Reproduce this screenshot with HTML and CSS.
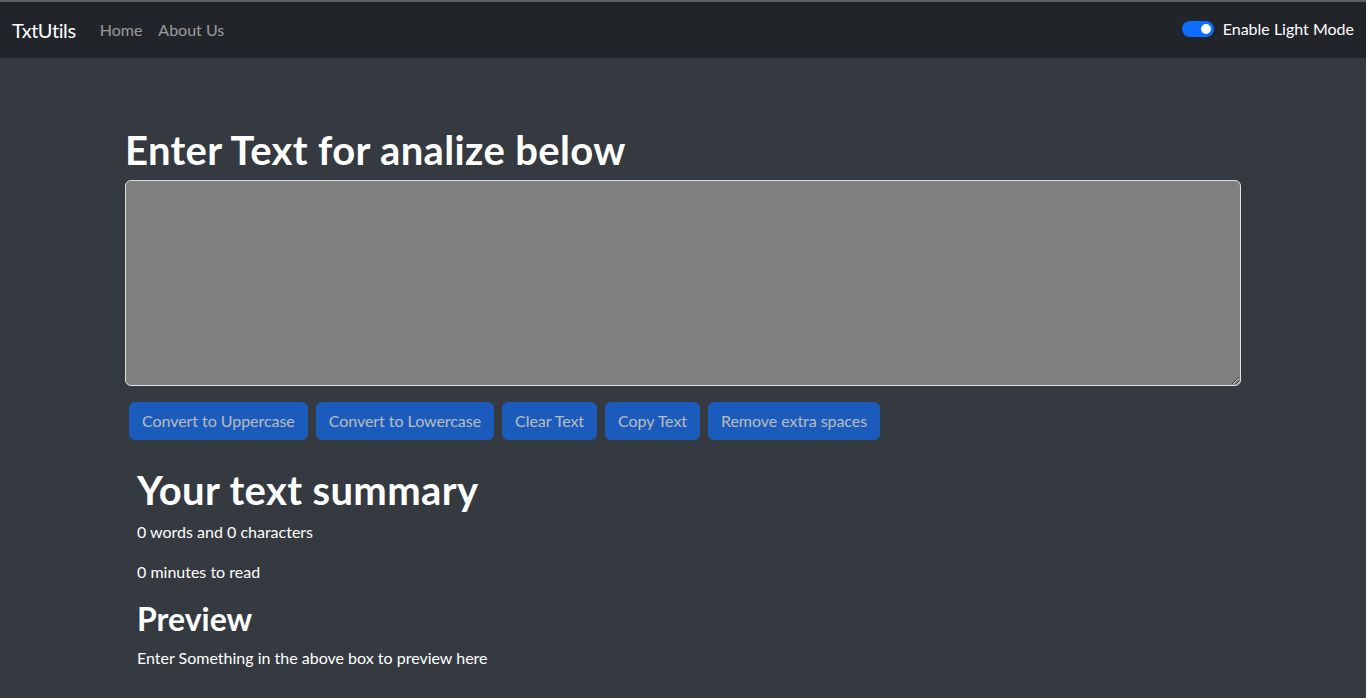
FILE: index.html
```html
<!DOCTYPE html>
<html lang="en">
<head>
<meta charset="utf-8">
<title>TxtUtils</title>
<link rel="stylesheet" href="styles.css">
</head>
<body>
<nav class="navbar">
  <div class="nav-left">
    <a class="brand" href="#">TxtUtils</a>
    <ul class="nav-links">
      <li><a class="nav-link" href="#">Home</a></li>
      <li><a class="nav-link" href="#">About Us</a></li>
    </ul>
  </div>
  <div class="switch">
    <span class="switch-track"><span class="switch-knob"></span></span>
    <label class="switch-label">Enable Light Mode</label>
  </div>
</nav>

<main class="container">
  <h1 class="title">Enter Text for analize below</h1>
  <textarea class="text-box" rows="8"></textarea>
  <div class="buttons">
    <button class="btn" disabled>Convert to Uppercase</button>
    <button class="btn" disabled>Convert to Lowercase</button>
    <button class="btn" disabled>Clear Text</button>
    <button class="btn" disabled>Copy Text</button>
    <button class="btn" disabled>Remove extra spaces</button>
  </div>

  <section class="summary">
    <h1 class="title">Your text summary</h1>
    <p class="line">0 words and 0 characters</p>
    <p class="line">0 minutes to read</p>
    <h2 class="subtitle">Preview</h2>
    <p class="line">Enter Something in the above box to preview here</p>
  </section>
</main>
</body>
</html>
```

FILE: styles.css
```css
* { box-sizing: border-box; }

html, body {
  margin: 0;
  padding: 0;
}

body {
  background: #343a40;
  color: #ffffff;
  font-family: Lato, "Noto Sans", sans-serif;
  font-size: 16px;
  line-height: 1.5;
  border-top: 2px solid #5d5e60;
  min-height: 698px;
}

.navbar {
  background: #212529;
  height: 56px;
  padding: 8px 12px;
  display: flex;
  align-items: center;
  justify-content: space-between;
}

.nav-left {
  display: flex;
  align-items: center;
}

.brand {
  color: #fff;
  text-decoration: none;
  font-size: 20px;
  line-height: 30px;
  padding: 5px 0;
  margin-right: 16px;
  letter-spacing: -0.4px;
}

.nav-links {
  list-style: none;
  margin: 0;
  padding: 0;
  display: flex;
}

.nav-link {
  display: block;
  padding: 8px;
  color: rgba(255, 255, 255, 0.55);
  text-decoration: none;
  font-size: 16px;
}

.switch {
  display: flex;
  align-items: center;
  gap: 9px;
  margin-top: -2px;
}

.switch-track {
  width: 32px;
  height: 16px;
  border-radius: 8px;
  background: #0d6efd;
  display: flex;
  align-items: center;
  justify-content: flex-end;
  padding: 0 3px;
}

.switch-knob {
  width: 10px;
  height: 10px;
  border-radius: 50%;
  background: #fff;
}

.switch-label {
  color: #fff;
  font-size: 16px;
}

.container {
  width: 1140px;
  margin: 0 auto;
  padding: 68px 12px 16px;
}

.title {
  font-size: 40px;
  font-weight: 700;
  line-height: 1.2;
  margin: 0 0 6px;
  letter-spacing: 0.35px;
}

.text-box {
  display: block;
  width: 100%;
  height: 206px;
  background: #808080;
  color: #fff;
  border: 1px solid #dee2e6;
  border-radius: 6px;
  padding: 6px 12px;
  font-family: inherit;
  font-size: 16px;
  line-height: 1.5;
  margin: 0 0 16px;
}

.buttons {
  display: flex;
  gap: 8px;
  padding: 0 4px;
}

.btn {
  background: #0d6efd;
  color: #fff;
  border: 1px solid #0d6efd;
  border-radius: 6px;
  padding: 6px 12px;
  font-family: inherit;
  font-size: 16px;
  line-height: 24px;
  letter-spacing: -0.05px;
  opacity: 0.65;
}

.summary {
  padding: 26px 12px 0;
}

.line {
  margin: 0 0 16px;
  font-size: 16px;
}

.subtitle {
  font-size: 32px;
  font-weight: 700;
  line-height: 1.2;
  margin: 0 0 8px;
}
```
